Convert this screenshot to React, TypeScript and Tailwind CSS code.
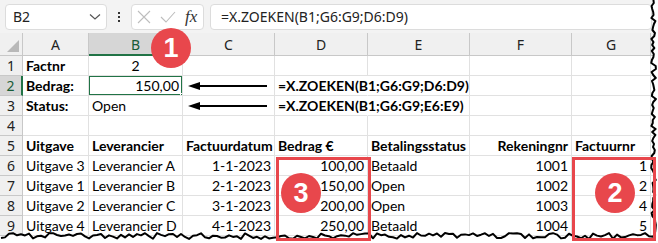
import React from "react";

const cols = ["A", "B", "C", "D", "E", "F", "G"];

type Cell = { v?: string; bold?: boolean; right?: boolean; overflow?: boolean };

const rows: Cell[][] = [
  [{ v: "Factnr", bold: true }, { v: "2", right: false }, {}, {}, {}, {}, {}],
  [{ v: "Bedrag:", bold: true }, { v: "150,00", right: true }, {}, { v: "=X.ZOEKEN(B1;G6:G9;D6:D9)", bold: true, overflow: true }, {}, {}, {}],
  [{ v: "Status:", bold: true }, { v: "Open" }, {}, { v: "=X.ZOEKEN(B1;G6:G9;E6:E9)", bold: true, overflow: true }, {}, {}, {}],
  [{}, {}, {}, {}, {}, {}, {}],
  [
    { v: "Uitgave", bold: true },
    { v: "Leverancier", bold: true },
    { v: "Factuurdatum", bold: true },
    { v: "Bedrag €", bold: true },
    { v: "Betalingsstatus", bold: true },
    { v: "Rekeningnr", bold: true, right: true },
    { v: "Factuurnr", bold: true },
  ],
  [{ v: "Uitgave 3" }, { v: "Leverancier A" }, { v: "1-1-2023", right: true }, { v: "100,00", right: true }, { v: "Betaald" }, { v: "1001", right: true }, { v: "1", right: true }],
  [{ v: "Uitgave 1" }, { v: "Leverancier B" }, { v: "2-1-2023", right: true }, { v: "150,00", right: true }, { v: "Open" }, { v: "1002", right: true }, { v: "2", right: true }],
  [{ v: "Uitgave 2" }, { v: "Leverancier C" }, { v: "3-1-2023", right: true }, { v: "200,00", right: true }, { v: "Open" }, { v: "1003", right: true }, { v: "4", right: true }],
  [{ v: "Uitgave 4" }, { v: "Leverancier D" }, { v: "4-1-2023", right: true }, { v: "250,00", right: true }, { v: "Betaald" }, { v: "1004", right: true }, { v: "5", right: true }],
];

function rand(seed: number) {
  let s = seed;
  return () => {
    s = (s * 9301 + 49297) % 233280;
    return s / 233280;
  };
}

function tornPath() {
  const r = rand(7);
  const pts: string[] = [];
  // right edge, top to bottom
  for (let y = 0; y <= 236; y += 3) {
    pts.push(`${651 + r() * 5},${y}`);
  }
  // bottom edge, right to left
  for (let x = 653; x >= 0; x -= 4) {
    pts.push(`${x},${233 + r() * 6}`);
  }
  return pts;
}

function Arrow() {
  return (
    <svg width="80" height="10" viewBox="0 0 80 10" className="absolute left-[5px] top-[5px]">
      <line x1="10" y1="5" x2="79" y2="5" stroke="black" strokeWidth="2" />
      <polygon points="0,5 12,1 12,9" fill="black" />
    </svg>
  );
}

function Badge({ n }: { n: string }) {
  return (
    <div className="absolute flex h-[40px] w-[40px] items-center justify-center rounded-full bg-[#e8474c] text-[27px] font-bold leading-none text-white [font-family:'Liberation_Sans',Arial,sans-serif]">
      {n}
    </div>
  );
}

export default function App() {
  const pts = tornPath();
  const fill = `M658,0 L${pts.join(" L")} L0,243 L658,243 Z`;
  const line = `M${pts.join(" L")}`;

  return (
    <div className="relative h-[243px] w-[658px] overflow-hidden bg-white [font-family:'Noto_Sans',sans-serif]">
      {/* formula bar */}
      <div className="flex h-[33px] items-center gap-[6px] bg-[#f3f3f3] pl-[5px] pr-[6px]">
        <div className="flex h-[26px] w-[102px] items-center justify-between rounded-[4px] border border-[#dcdcdc] bg-white pl-[7px] pr-[5px] text-[14px] text-[#222]">
          <span>B2</span>
          <svg width="12" height="8" viewBox="0 0 12 8">
            <path d="M1 1.5 L6 6 L11 1.5" fill="none" stroke="#555" strokeWidth="1.2" />
          </svg>
        </div>
        <div className="flex w-[12px] flex-col items-center gap-[2px]">
          <div className="h-[2px] w-[2px] bg-[#333]" />
          <div className="h-[2px] w-[2px] bg-[#333]" />
          <div className="h-[2px] w-[2px] bg-[#333]" />
        </div>
        <div className="flex h-[26px] w-[73px] items-center gap-[9px] rounded-[4px] border border-[#dcdcdc] bg-white pl-[5px]">
          <svg width="14" height="14" viewBox="0 0 14 14">
            <path d="M1 1 L13 13 M13 1 L1 13" stroke="#bdbdbd" strokeWidth="1.1" />
          </svg>
          <svg width="16" height="14" viewBox="0 0 16 14">
            <path d="M1 7 L6 12 L15 2" fill="none" stroke="#bdbdbd" strokeWidth="1.1" />
          </svg>
          <span className="text-[17px] italic leading-none text-[#333] [font-family:'Liberation_Serif',serif]">fx</span>
        </div>
        <div className="flex h-[26px] flex-1 items-center rounded-[4px] border border-[#dcdcdc] bg-white pl-[10px] text-[14px] text-[#222]">
          =X.ZOEKEN(B1;G6:G9;D6:D9)
        </div>
      </div>

      {/* grid */}
      <div className="grid grid-cols-[23px_66px_94px_92px_93px_102px_102px_79px_7px] grid-rows-[23px_repeat(9,20px)] [font-family:Lato,'Liberation_Sans',sans-serif]">
        <div className="relative border-b border-r border-[#c8c8c8] bg-[#f0f0f0]">
          <div className="absolute bottom-[3px] right-[3px] h-0 w-0 border-b-[12px] border-l-[12px] border-b-[#b8b8b8] border-l-transparent" />
        </div>
        {cols.map((c) => (
          <div
            key={c}
            className={
              c === "B"
                ? "flex items-center justify-center border-b-2 border-r border-b-[#217346] border-r-[#c8c8c8] bg-[#d6d6d6] pt-[1px] text-[14px] text-[#185c37] [font-family:'Noto_Sans',sans-serif]"
                : "flex items-center justify-center border-b border-r border-[#c8c8c8] bg-[#f0f0f0] text-[14px] text-[#222] [font-family:'Noto_Sans',sans-serif]"
            }
          >
            {c}
          </div>
        ))}
        <div className="border-b border-[#c8c8c8] bg-[#f0f0f0]" />
        {rows.map((row, ri) => (
          <React.Fragment key={ri}>
            <div
              className={
                ri === 1
                  ? "flex items-center justify-center border-b border-r-2 border-b-[#c8c8c8] border-r-[#217346] bg-[#d6d6d6] text-[14px] text-[#185c37] [font-family:'Noto_Sans',sans-serif]"
                  : "flex items-center justify-center border-b border-r border-[#c8c8c8] bg-[#f0f0f0] text-[14px] text-[#222] [font-family:'Noto_Sans',sans-serif]"
              }
            >
              {ri + 1}
            </div>
            {row.map((cell, ci) => {
              const selected = ri === 1 && ci === 1;
              const center = ri === 0 && ci === 1;
              return (
                <div
                  key={ci}
                  className={`relative flex items-center whitespace-nowrap border-b border-r border-[#e1e1e1] px-[3px] text-[14px] text-black ${
                    cell.overflow ? "overflow-visible z-10 border-r-transparent" : "overflow-hidden"
                  } ${cell.right ? "justify-end" : center ? "justify-center" : "justify-start"} ${cell.bold ? "font-bold" : ""}`}
                >
                  {selected && (
                    <>
                      <div className="pointer-events-none absolute inset-[-1px] border-2 border-[#217346]" />
                      <div className="absolute bottom-[-4px] right-[-4px] z-20 h-[6px] w-[6px] border border-white bg-[#217346]" />
                    </>
                  )}
                  {ri === 1 && ci === 2 && <Arrow />}
                  {ri === 2 && ci === 2 && <Arrow />}
                  {cell.v && <span className={cell.overflow ? "relative" : ""}>{cell.v}</span>}
                </div>
              );
            })}
            <div className="border-b border-[#e1e1e1]" />
          </React.Fragment>
        ))}
      </div>

      {/* torn edge */}
      <svg className="absolute left-0 top-0" width="658" height="243" viewBox="0 0 658 243">
        <path d={fill} fill="white" />
        <path d={line} fill="none" stroke="black" strokeWidth="2" strokeLinejoin="round" />
      </svg>

      {/* annotations */}
      <div className="absolute left-[276px] top-[157px] h-[84px] w-[95px] border-[3px] border-[#e8474c]" />
      <div className="absolute left-[572px] top-[157px] h-[84px] w-[84px] border-[3px] border-[#e8474c]" />
      <div className="absolute left-[151px] top-[28px]">
        <Badge n="1" />
      </div>
      <div className="absolute left-[281px] top-[173px]">
        <Badge n="3" />
      </div>
      <div className="absolute left-[595px] top-[173px]">
        <Badge n="2" />
      </div>
    </div>
  );
}
